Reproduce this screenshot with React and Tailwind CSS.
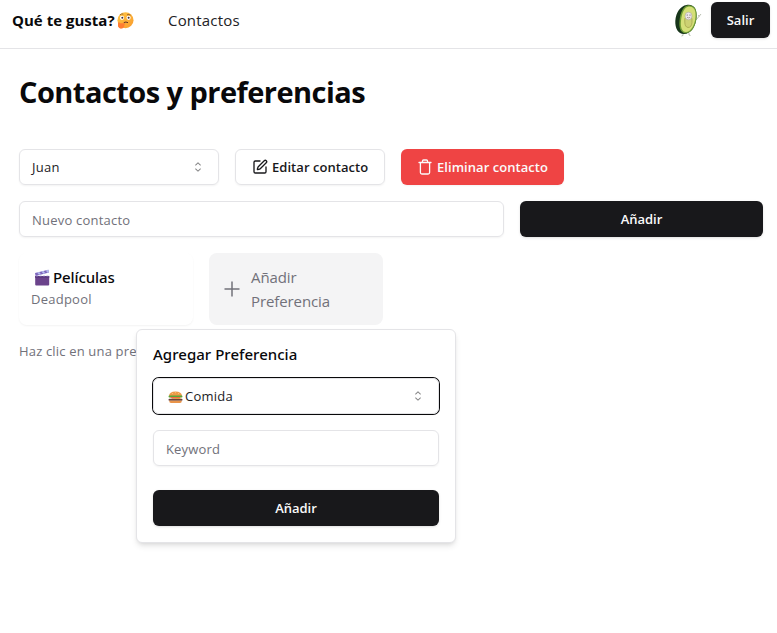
import { SquarePen } from "lucide-react";

function Caret() {
  return (
    <svg className="size-4 shrink-0 opacity-50" viewBox="0 0 15 15" fill="currentColor">
      <path
        fillRule="evenodd"
        clipRule="evenodd"
        d="M4.93179 5.43179C4.75605 5.60753 4.75605 5.89245 4.93179 6.06819C5.10753 6.24392 5.39245 6.24392 5.56819 6.06819L7.49999 4.13638L9.43179 6.06819C9.60753 6.24392 9.89245 6.24392 10.0682 6.06819C10.2439 5.89245 10.2439 5.60753 10.0682 5.43179L7.81819 3.18179C7.73379 3.0974 7.61933 3.04999 7.49999 3.04999C7.38064 3.04999 7.26618 3.0974 7.18179 3.18179L4.93179 5.43179ZM10.0682 9.56819C10.2439 9.39245 10.2439 9.10753 10.0682 8.93179C9.89245 8.75606 9.60753 8.75606 9.43179 8.93179L7.49999 10.8636L5.56819 8.93179C5.39245 8.75606 5.10753 8.75606 4.93179 8.93179C4.75605 9.10753 4.75605 9.39245 4.93179 9.56819L7.18179 11.8182C7.35753 11.9939 7.64245 11.9939 7.81819 11.8182L10.0682 9.56819Z"
      />
    </svg>
  );
}

function Thinking() {
  return (
    <svg className="ml-[2px] size-[17px]" viewBox="0 0 17 17">
      <defs>
        <linearGradient id="face" x1="0" y1="0" x2="1" y2="1">
          <stop offset="0" stopColor="#ffc847" />
          <stop offset="1" stopColor="#f99a2b" />
        </linearGradient>
      </defs>
      <circle cx="8.5" cy="8.2" r="8" fill="url(#face)" />
      <circle cx="5" cy="5.8" r="2.1" fill="#fff" />
      <circle cx="11.6" cy="5.8" r="2.1" fill="#fff" />
      <circle cx="5.3" cy="5.8" r="1" fill="#402a32" />
      <circle cx="11.6" cy="5.8" r="1" fill="#402a32" />
      <path d="M3 2.8Q4.5 1.5 6.3 2.1M10 2.8Q12 1.8 13.5 3.2" stroke="#70442a" strokeWidth=".7" fill="none" />
      <path d="M6.8 10.6Q9 9.4 11 10.7" stroke="#5d3028" strokeWidth="1" fill="none" />
      <path d="M1 10.8Q2 9.6 3.2 11.3L7.6 11.3Q8.8 12 7.2 12.8Q8 15.4 5.8 16.3Q2.3 17.5 1 14.6Z" fill="#ff7d32" />
    </svg>
  );
}

function Clapper() {
  return (
    <svg className="mr-[2px] ml-[3px] h-[17px] w-[17px]" viewBox="0 0 17 17">
      <path d="M1.2 7H15.2V15.5Q15.2 16.5 14.2 16.5H2.2Q1.2 16.5 1.2 15.5Z" fill="#6b438b" />
      <path d="M1.2 7H15.2V9H1.2Z" fill="#5d3a80" />
      <path d="M1 4L14.3 .8L15 3.6L1.6 6.9Z" fill="#7f67bd" />
      <path d="M3 3.5L5 5.8L7 5.3L5.2 3ZM7.4 2.5L9.3 4.8L11.3 4.3L9.5 2ZM11.8 1.4L13.4 3.8L15 3.4L14.3 .8Z" fill="#b5bdf0" />
      <path d="M2 7.1H15" stroke="#8f83c8" strokeWidth=".7" strokeDasharray="2 1.5" />
    </svg>
  );
}

function Burger() {
  return (
    <svg className="mt-px mr-[2px] ml-[2px] h-[14px] w-[15px]" viewBox="0 0 15 14">
      <path d="M1 6Q1.3 1.5 7.5 1.5T14 6Z" fill="#ed9a48" />
      <path d="M4 3.5h1M7 2.7h1M10 3.5h1" stroke="#ffd08a" strokeWidth=".7" />
      <rect x=".5" y="5.4" width="14" height="2" rx="1" fill="#58a53b" />
      <path d="M2 7H13L11 8.5H4Z" fill="#ef4545" />
      <path d="M1 7.8H14L10 9.4L7.5 8.7Z" fill="#ffc936" />
      <rect x=".5" y="8.8" width="14" height="2" rx="1" fill="#69413a" />
      <path d="M1.2 10.7H13.8Q13.8 13 12 13H3Q1.2 13 1.2 10.7Z" fill="#e9944a" />
    </svg>
  );
}

function Avocado() {
  return (
    <svg className="h-9 w-9" viewBox="0 0 36 36">
      <g fill="none" stroke="#9ba58f" strokeWidth=".7">
        <path d="M13 31V33.5L11.5 34M19 31V33L20.5 33.5M25 19L29 14.5L31 12M29 14.5L28.5 13" />
      </g>
      <path d="M16.5 3C24 1.8 27 7 26.5 15C26 24 21 32 14 32C8 32 5 26 5.3 19C6 10 10.5 4 16.5 3Z" fill="#17351a" />
      <path d="M18.5 3.2C25 3 27.2 8 26.6 15C26 24 21.5 31.5 15.5 31.2C10.5 31 8.8 25.5 9.5 19C10.3 10.5 13 3.7 18.5 3.2Z" fill="#6f9c35" />
      <path d="M19 4.4C24.3 4.4 26.1 8.5 25.5 15C24.8 23 21 30 16 30C11.8 30 10.3 25 11 19C11.8 11 14.2 4.7 19 4.4Z" fill="#d5df78" />
      <path d="M14.8 16.5H22V20.5Q21.5 25.5 18 25.5Q14.8 25 14.8 20Z" fill="#cdd173" stroke="#9f9d48" strokeWidth=".7" />
      <ellipse cx="18.5" cy="14" rx="3.5" ry="3.8" fill="#eee7e9" stroke="#aaa5a1" strokeWidth=".6" />
      <circle cx="17.2" cy="13" r=".6" fill="#554e52" />
      <circle cx="20" cy="13" r=".6" fill="#554e52" />
      <path d="M17 15.3Q18.5 16.5 20.2 15.3" stroke="#81676c" strokeWidth=".6" fill="none" />
    </svg>
  );
}

function Trash() {
  return (
    <svg className="mr-1 h-4 w-4" viewBox="0 0 16 16" fill="none" stroke="currentColor" strokeWidth="1.3" strokeLinejoin="round" strokeLinecap="round">
      <path d="M2 3.5H14M5.5 3.3V2Q5.5 1 6.5 1H9.5Q10.5 1 10.5 2V3.3M3.4 3.7V13.5Q3.4 15 4.9 15H11.1Q12.6 15 12.6 13.5V3.7" />
    </svg>
  );
}

export default function App() {
  return (
    <div className="relative h-[633px] w-[777px] overflow-hidden bg-white font-['Open_Sans','Noto_Sans',sans-serif] text-sm text-[#09090b]">
      <header className="flex h-[49px] items-start border-b border-[#e4e4e7] pr-[7px] pl-3">
        <div className="flex h-[41px] items-center text-base font-bold whitespace-nowrap">
          <span className="w-[103px] text-[15px] tracking-[0.02px]">Qué te gusta?</span>
          <Thinking />
        </div>
        <nav className="ml-[34px] flex h-[41px] items-center text-[15px] tracking-[0.2px] text-[#222225]">Contactos</nav>
        <div className="ml-auto flex items-center gap-[5px] pt-[2px]">
          <Avocado />
          <button className="h-9 w-[59px] rounded-md bg-[#18181b] text-[13px] font-semibold text-[#fafafa] shadow-sm">Salir</button>
        </div>
      </header>
      <main className="px-[19px] pr-[14px]">
        <h1 className="pt-[25px] text-[29px] leading-9 font-bold tracking-[-0.54px] whitespace-nowrap">Contactos y preferencias</h1>
        <div className="mt-[39px] flex gap-4">
          <button className="flex h-9 w-[200px] items-center justify-between rounded-md border border-[#e4e4e7] px-3 shadow-xs">
            <span className="text-[13px] tracking-[0.25px] text-[#222225]">Juan</span>
            <Caret />
          </button>
          <button className="flex h-9 w-[150px] items-center rounded-md border border-[#e4e4e7] pl-4 text-[13px] font-semibold tracking-[0.05px] whitespace-nowrap text-[#18181b] shadow-xs">
            <SquarePen className="mr-1 size-4 shrink-0" strokeWidth={2} />
            <span>Editar contacto</span>
          </button>
          <button className="flex h-9 w-[163px] items-center rounded-md bg-[#ef4444] pl-4 text-[13px] font-semibold tracking-[0.05px] whitespace-nowrap text-[#fafafa] shadow-xs">
            <Trash />
            <span>Eliminar contacto</span>
          </button>
        </div>
        <div className="mt-4 flex gap-4">
          <div className="flex h-9 w-[485px] items-center rounded-md border border-[#e4e4e7] px-3 pt-[2px] text-[13px] tracking-[0.22px] text-[#71717a] shadow-xs">Nuevo contacto</div>
          <button className="h-9 w-[243px] rounded-md bg-[#18181b] text-[13px] font-semibold text-[#fafafa] shadow-sm">Añadir</button>
        </div>
        <div className="mt-4 flex gap-4">
          <article className="h-[72px] w-[174px] rounded-lg px-3 pt-3 shadow-xs">
            <div className="flex h-6 items-center font-['Noto_Sans',sans-serif] text-[15px] font-medium">
              <Clapper />
              <span className="mt-px tracking-[-0.1px]">Películas</span>
            </div>
            <div className="text-[13px] leading-5 tracking-[0.25px] text-[#71717a]">Deadpool</div>
          </article>
          <button className="flex h-[72px] w-[174px] items-center rounded-lg bg-[#f4f4f5] pl-[15px] text-left text-[15px] leading-6 tracking-[-0.1px] text-[#71717a]">
            <svg className="mr-[11px] size-4" viewBox="0 0 16 16" stroke="currentColor" strokeWidth="1.5"><path d="M.5 8H15.5M8 .5V15.5" /></svg>
            <span>Añadir<br />Preferencia</span>
          </button>
        </div>
        <p className="mt-4 w-[117px] overflow-hidden text-[13px] leading-5 tracking-[0.17px] whitespace-nowrap text-[#71717a]">Haz clic en una pre</p>
      </main>
      <section className="absolute top-[329px] left-[136px] h-[214px] w-[320px] rounded-md border border-[#e4e4e7] bg-white px-4 pt-4 shadow-md">
        <h2 className="font-['Noto_Sans',sans-serif] text-[15px] leading-4 font-medium tracking-[0.03px] whitespace-nowrap">Agregar Preferencia</h2>
        <button className="mt-4 flex h-9 w-full items-center justify-between rounded-md border border-[#e4e4e7] px-3 shadow-xs ring-1 ring-[#09090b]">
          <span className="flex items-center text-[13px] tracking-[0.25px] text-[#222225]"><Burger />Comida</span>
          <Caret />
        </button>
        <div className="mt-4 flex h-9 items-center rounded-md border border-[#e4e4e7] px-3 pt-[2px] text-[13px] tracking-[0.15px] text-[#71717a] shadow-xs">Keyword</div>
        <button className="mt-6 h-9 w-full rounded-md bg-[#18181b] text-[13px] font-semibold text-[#fafafa] shadow-sm">Añadir</button>
      </section>
    </div>
  );
}
